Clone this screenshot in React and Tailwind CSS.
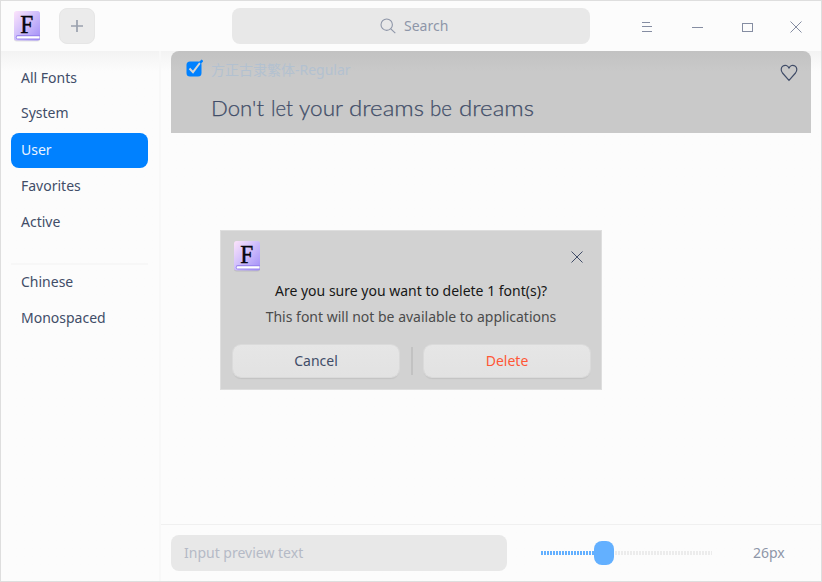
import React from "react";

function FontLogo({ id }) {
  return (
    <svg width="28" height="32" viewBox="0 0 28 32" className="block">
      <defs>
        <linearGradient id={id} x1="0" y1="0" x2="1" y2="1">
          <stop offset="0" stopColor="#fde4fb" />
          <stop offset="0.5" stopColor="#cdbcfb" />
          <stop offset="1" stopColor="#a08cf8" />
        </linearGradient>
      </defs>
      <rect x="1" y="2" width="26" height="29.5" rx="2.5" fill="#000" opacity="0.1" />
      <rect x="1" y="1" width="26" height="29.5" rx="2.500" fill={`url(#${id})`} />
      <path d="M27 25H5a2.200 2.200 0 0 0 0 4.400h22z" fill="#9a86ee" />
      <path d="M26.500 26.200H4.800a1.200 1.200 0 0 0 0 2.400h21.700z" fill="#fff" />
      <text x="7.300" y="23.200" fontSize="24.500" textLength="13" lengthAdjust="spacingAndGlyphs" className="font-['Liberation_Serif',serif]" fill="#08060f" stroke="#08060f" strokeWidth="0.450">F</text>
    </svg>
  );
}

function CloseIcon({ color }) {
  return (
    <svg width="12" height="12" viewBox="0 0 12 12" className="block">
      <path d="M.5.5l11 11M11.500.5l-11 11" stroke={color} fill="none" />
    </svg>
  );
}

function NavItem({ label }) {
  return <li className="flex h-[35px] items-center px-[10px]">{label}</li>;
}

const words = [
  ["Don't", 0, 53],
  ["let", 60, 22],
  ["your", 88, 44],
  ["dreams", 138, 75],
  ["be", 219, 22],
  ["dreams", 248, 75],
];

function TitleBar() {
  return (
    <header className="flex h-[50px] shrink-0 items-start">
      <div className="ml-[12px] mt-[9px]"><FontLogo id="logo-bar" /></div>
      <button className="ml-[18px] mt-[7px] flex size-9 items-center justify-center rounded-lg border border-[#e6e6e6] bg-[#ebebeb]">
        <svg width="12" height="12" viewBox="0 0 12 12"><path d="M6 0v12M0 6h12" stroke="#9aa1ae" strokeWidth="1.700" /></svg>
      </button>
      <div className="ml-[137px] mt-[7px] flex h-9 w-[358px] items-center rounded-lg bg-[#e8e8e8] pl-[148px] text-[#8e96a8]">
        <svg width="16" height="16" viewBox="0 0 16 16" fill="none" stroke="#8e96a8" strokeWidth="1.100">
          <circle cx="6.700" cy="6.700" r="5.700" /><path d="M10.800 10.800l4.500 4.300" />
        </svg>
        <span className="ml-[8px] pb-[2px]">Search</span>
      </div>
      <div className="ml-[51px] mt-[20px] flex text-[#858da2]">
        <svg width="12" height="12" viewBox="0 0 12 12" shapeRendering="crispEdges"><path d="M1 1.500h8M1 5.500h10M1 10.500h10" stroke="currentColor" /></svg>
        <svg width="12" height="12" viewBox="0 0 12 12" shapeRendering="crispEdges" className="ml-[38px]"><path d="M1 6.500h11" stroke="currentColor" /></svg>
        <svg width="12" height="12" viewBox="0 0 12 12" shapeRendering="crispEdges" className="ml-[38px]"><path d="M1.500 2.500h10v8h-10z" stroke="currentColor" fill="none" /></svg>
        <div className="ml-[37px]"><CloseIcon color="#858da2" /></div>
      </div>
    </header>
  );
}

function FontRow() {
  return (
    <div className="flex h-[82px] w-[640px] items-start rounded-t-lg bg-linear-to-b from-[#c2c2c2] to-[#c9c9c9] to-25%">
      <svg width="18" height="18" viewBox="0 0 18 18" className="ml-[14px] mt-[8px]">
        <rect x="1.500" y="2.500" width="15" height="15" rx="3.500" fill="#0081ff" />
        <path d="M4.500 9.500l3.500 3.700L15.300 3.500" stroke="#d6d6d6" strokeWidth="2" fill="none" />
        <path d="M14.800 4l2.700-2.700" stroke="#0081ff" strokeWidth="2.500" />
      </svg>
      <div className="ml-[8px] flex w-[360px] flex-col">
        <div className="mt-[9px] h-5 whitespace-nowrap leading-5 text-[#b3c1d0]">方正古隶繁体-Regular</div>
        <svg width="330" height="32" viewBox="0 0 330 32" className="mt-[11px] block overflow-visible" fill="#414d68" stroke="#414d68" strokeWidth="0.250">
          {words.map(([word, x, width]) => (
            <text key={x} x={x} y="25" fontSize="22" fontWeight="300" textLength={width} lengthAdjust="spacingAndGlyphs" className="font-['Lato',sans-serif]">{word}</text>
          ))}
        </svg>
      </div>
      <svg width="18" height="18" viewBox="0 0 18 18" className="ml-[209px] mt-[13px]" fill="none" stroke="#414d68" strokeWidth="1.200">
        <path d="M9 16.300L2.500 9C.6 6.600.8 3.300 3 2c2.200-1.300 4.700-.6 6 2 1.300-2.600 3.800-3.300 6-2 2.200 1.300 2.400 4.600.5 7z" />
      </svg>
    </div>
  );
}

function Slider() {
  return (
    <div className="ml-[34px] flex h-6 w-[171px] items-center">
      <div className="h-1 w-[53px] bg-[repeating-linear-gradient(90deg,#63b0ff_0_2px,transparent_2px_3px)]" />
      <div className="h-6 w-5 shrink-0 rounded-lg bg-[#63b0ff]" />
      <div className="h-1 w-[98px] bg-[repeating-linear-gradient(90deg,transparent_0_1px,#ececec_1px_3px)]" />
    </div>
  );
}

function Dialog() {
  const button = "flex h-8 w-[166px] items-center justify-center rounded-lg bg-linear-to-b from-[#e6e6e6] to-[#e2e2e2] pb-[2px] shadow-[0_0_0_1px_#dadada,0_2px_1px_#c3c3c3]";
  return (
    <div className="absolute left-[219px] top-[229px] flex h-[160px] w-[382px] flex-col border border-[#dedede] bg-[#d2d2d2]">
      <div className="flex h-[50px] items-start justify-between pl-[12px] pr-[18px]">
        <div className="mt-[9px]"><FontLogo id="logo-dialog" /></div>
        <div className="mt-[20px]"><CloseIcon color="#414d68" /></div>
      </div>
      <p className="text-center leading-5 text-[#171717]">Are you sure you want to delete 1 font(s)?</p>
      <p className="mt-[6px] text-center leading-5 text-[#4b4b4b]">This font will not be available to applications</p>
      <div className="mt-[18px] flex items-center pl-[12px]">
        <button className={button + " text-[#414d68]"}>Cancel</button>
        <div className="ml-[12px] mr-[11px] h-7 w-[2px] bg-[#c2c2c2]" />
        <button className={button + " text-[#ff5736]"}>Delete</button>
      </div>
    </div>
  );
}

export default function App() {
  return (
    <div className="relative flex h-[582px] w-[822px] flex-col overflow-hidden border border-[#dedede] bg-[#fcfcfc] font-['Noto_Sans','Noto_Sans_CJK_SC',sans-serif] text-[14px] text-[#414d68]">
      <TitleBar />
      <div className="flex min-h-0 flex-1 bg-linear-to-b from-[#f3f3f3] to-[#fcfcfc] to-[20px]">
        <nav className="w-[160px] shrink-0 border-r-2 border-[#f8f8f8] pl-[10px] pr-[11px]">
          <ul className="flex flex-col pt-[9px]">
            <NavItem label="All Fonts" />
            <NavItem label="System" />
            <li className="mt-[3px] flex h-[35px] items-center rounded-lg bg-[#0081ff] px-[10px] pb-[2px] text-[#eaf4ff]">User</li>
            <NavItem label="Favorites" />
            <li className="mt-[1px] flex h-[35px] items-center px-[10px]">Active</li>
          </ul>
          <div className="mt-[24px] h-[2px] bg-[#f7f7f7]" />
          <ul className="-mt-[1px] flex flex-col gap-[1px]">
            <NavItem label="Chinese" />
            <NavItem label="Monospaced" />
          </ul>
        </nav>
        <main className="flex flex-1 flex-col">
          <div className="flex-1 pl-[10px]"><FontRow /></div>
          <footer className="flex h-[57px] items-center border-t border-[#f0f0f0] pl-[10px]">
            <div className="flex h-9 w-[336px] items-center rounded-lg bg-[#e8e8e8] pb-[2px] pl-[13px] text-[#b5bac6]">Input preview text</div>
            <Slider />
            <span className="ml-[41px] pb-[2px] text-[#8e96a8]">26px</span>
          </footer>
        </main>
      </div>
      <Dialog />
    </div>
  );
}
